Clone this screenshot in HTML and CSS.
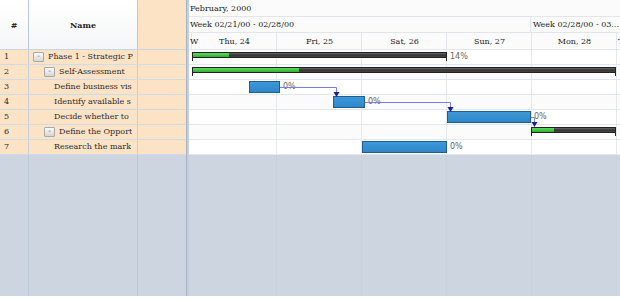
FILE: index.html
```html
<!DOCTYPE html>
<html lang="en">
<head>
    <meta charset="UTF-8">
    <title>Gantt - Strategic Plan</title>
    <link rel="stylesheet" href="styles.css">
</head>
<body>
    <div class="gantt-app">
        <div class="task-grid">
            <div class="grid-head">
                <div class="col-num">#</div>
                <div class="col-name">Name</div>
                <div class="col-extra"></div>
            </div>
            <div class="grid-body">
                <div class="grid-row"><div class="col-num">1</div><div class="col-name lvl0"><span class="toggle">-</span><span class="label">Phase 1 - Strategic P</span></div><div class="col-extra"></div></div>
                <div class="grid-row"><div class="col-num">2</div><div class="col-name lvl1"><span class="toggle">-</span><span class="label">Self-Assessment</span></div><div class="col-extra"></div></div>
                <div class="grid-row"><div class="col-num">3</div><div class="col-name lvl2"><span class="label">Define business vis</span></div><div class="col-extra"></div></div>
                <div class="grid-row"><div class="col-num">4</div><div class="col-name lvl2"><span class="label">Identify available s</span></div><div class="col-extra"></div></div>
                <div class="grid-row"><div class="col-num">5</div><div class="col-name lvl2"><span class="label">Decide whether to</span></div><div class="col-extra"></div></div>
                <div class="grid-row"><div class="col-num">6</div><div class="col-name lvl1"><span class="toggle">-</span><span class="label">Define the Opport</span></div><div class="col-extra"></div></div>
                <div class="grid-row"><div class="col-num">7</div><div class="col-name lvl2"><span class="label">Research the mark</span></div><div class="col-extra"></div></div>
            </div>
        </div>

        <div class="splitter"></div>

        <div class="chart">
            <div class="chart-head">
                <div class="head-row month"><div class="cell">February, 2000</div></div>
                <div class="head-row weeks">
                    <div class="cell week-a">Week 02/21/00 - 02/28/00</div>
                    <div class="cell week-b">Week 02/28/00 - 03...</div>
                </div>
                <div class="head-row days">
                    <div class="cell day-stub">W</div>
                    <div class="cell day">Thu, 24</div>
                    <div class="cell day">Fri, 25</div>
                    <div class="cell day">Sat, 26</div>
                    <div class="cell day">Sun, 27</div>
                    <div class="cell day">Mon, 28</div>
                    <div class="cell day-stub">T</div>
                </div>
            </div>
            <div class="chart-body">
                <div class="chart-row">
                    <div class="summary" style="left: 3px; width: 255px;"><div class="done" style="width: 36px;"></div></div>
                    <span class="pct" style="left: 261px;">14%</span>
                </div>
                <div class="chart-row alt">
                    <div class="summary" style="left: 3px; width: 424px;"><div class="done" style="width: 106px;"></div></div>
                </div>
                <div class="chart-row">
                    <div class="task" style="left: 60px; width: 31px;"></div>
                    <span class="pct" style="left: 94px;">0%</span>
                </div>
                <div class="chart-row alt">
                    <div class="task" style="left: 144px; width: 32px;"></div>
                    <span class="pct" style="left: 179px;">0%</span>
                </div>
                <div class="chart-row">
                    <div class="task" style="left: 258px; width: 84px;"></div>
                    <span class="pct" style="left: 345px;">0%</span>
                </div>
                <div class="chart-row alt">
                    <div class="summary" style="left: 342px; width: 85px;"><div class="done" style="width: 22px;"></div></div>
                </div>
                <div class="chart-row">
                    <div class="task" style="left: 173px; width: 85px;"></div>
                    <span class="pct" style="left: 261px;">0%</span>
                </div>

                <!-- dependency links -->
                <svg class="links" width="440" height="110" viewBox="0 0 440 110">
                    <g fill="none" stroke="#7b7be0" stroke-width="1">
                        <polyline points="91,37.5 147.5,37.5 147.5,43"/>
                        <polyline points="176,52.5 261.5,52.5 261.5,58"/>
                        <polyline points="342,67.5 345.5,67.5 345.5,73"/>
                    </g>
                    <g fill="#1c1c9c">
                        <polygon points="144.5,42 150.5,42 147.5,47"/>
                        <polygon points="258.5,57 264.5,57 261.5,62"/>
                        <polygon points="342.5,72 348.5,72 345.5,77"/>
                    </g>
                </svg>
            </div>
        </div>
    </div>
</body>
</html>
```

FILE: styles.css
```css
body {
    margin: 0;
    background-color: #fff;
    font-family: "DejaVu Serif", serif;
    font-size: 8px;
    color: #2a2a2a;
}
.gantt-app {
    display: flex;
    height: 296px;
    background-color: #cdd6e0;
    overflow: hidden;
}

/* left task grid */
.task-grid {
    width: 186px;
    flex: none;
    display: flex;
    flex-direction: column;
}
.grid-head,
.grid-row {
    display: grid;
    grid-template-columns: 28px 108px 48px;
    column-gap: 1px;
}
.grid-head {
    height: 49px;
    border-bottom: 1px solid #c9d5e0;
    background-color: #b8c8d8;
}
.grid-head > div {
    display: flex;
    align-items: center;
    justify-content: center;
    font-weight: bold;
    color: #222;
    background: linear-gradient(#fff, #f5f6f7);
}
.grid-head .col-extra {
    background: #fde3c6;
}
.grid-body {
    flex: 1;
    display: flex;
    flex-direction: column;
    background-image:
        linear-gradient(#bccad8, #bccad8),
        linear-gradient(#bccad8, #bccad8);
    background-size: 1px 100%, 1px 100%;
    background-position: 28px 0, 137px 0;
    background-repeat: no-repeat;
}
.grid-row {
    height: 14px;
    border-bottom: 1px solid #d2dbe4;
    background-color: #c3cfdb;
}
.grid-row > div {
    background-color: #fde3c6;
    line-height: 14px;
    white-space: nowrap;
    overflow: hidden;
}
.grid-row .col-num {
    padding-left: 4px;
}
.grid-row .col-name {
    display: flex;
    align-items: center;
    padding-right: 4px;
}
.label {
    overflow: hidden;
}
.lvl0 { padding-left: 4px; }
.lvl1 { padding-left: 15px; }
.lvl2 { padding-left: 25px; }
.toggle {
    flex: none;
    width: 9px;
    height: 8px;
    margin-right: 4px;
    border: 1px solid #a9a9a9;
    border-radius: 1px;
    background: linear-gradient(#fafafa, #d6d6d6);
    font-family: "DejaVu Sans", sans-serif;
    font-size: 7px;
    line-height: 7px;
    text-align: center;
    color: #555;
}

.splitter {
    width: 3px;
    flex: none;
    background-color: #c3cfdb;
    border-left: 1px solid #a7b4c1;
    box-sizing: border-box;
}

/* right chart */
.chart {
    flex: 1;
    display: flex;
    flex-direction: column;
    min-width: 0;
}
.chart-head {
    height: 50px;
    background-color: #fbfbfb;
}
.head-row {
    display: flex;
    border-bottom: 1px solid #e2e6ea;
    white-space: nowrap;
}
.head-row.month { height: 16px; }
.head-row.weeks { height: 15px; }
.head-row.days { height: 16px; }
.cell {
    display: flex;
    align-items: center;
    padding-left: 1px;
    box-sizing: border-box;
    overflow: hidden;
    color: #222;
}
.week-a {
    width: 342px;
    flex: none;
    border-right: 1px solid #e2e6ea;
}
.week-b {
    flex: 1;
    padding-left: 2px;
}
.day {
    width: 85px;
    flex: none;
    justify-content: center;
    border-right: 1px solid #e2e6ea;
}
.day-stub {
    width: 3px;
    flex: none;
    overflow: visible;
    position: relative;
}
.day-stub:first-child {
    border-right: 1px solid #e2e6ea;
    z-index: 1;
}

.chart-body {
    flex: 1;
    position: relative;
    background-image: repeating-linear-gradient(to right, transparent 0 84px, #c8d2dc 84px 85px);
    background-position: 3px 0;
}
.chart-row {
    height: 14px;
    border-bottom: 1px solid #e3e7eb;
    position: relative;
    background-color: #fff;
    background-image: repeating-linear-gradient(to right, transparent 0 84px, #e6e9ec 84px 85px);
    background-position: 3px 0;
}
.chart-row.alt {
    background-color: #fbfbfb;
}
.summary {
    position: absolute;
    top: 2px;
    height: 6px;
    background: linear-gradient(#6a6a6a, #333 50%, #444);
    border: 1px solid #222;
    box-sizing: border-box;
}
.summary::before,
.summary::after {
    content: "";
    position: absolute;
    top: 4px;
    width: 1px;
    height: 4px;
    background-color: #222;
}
.summary::before { left: -1px; }
.summary::after { right: -1px; }
.summary .done {
    height: 100%;
    background: linear-gradient(#5fdc5f, #2fae2f);
}
.task {
    position: absolute;
    top: 1px;
    height: 12px;
    background: linear-gradient(#3d97d8, #2f87c8);
    border: 1px solid #1d5f91;
    box-sizing: border-box;
}
.pct {
    position: absolute;
    top: 0;
    line-height: 14px;
    font-family: "DejaVu Sans", sans-serif;
    font-size: 8px;
    color: #666;
}
.links {
    position: absolute;
    left: 0;
    top: 0;
    pointer-events: none;
}
```
